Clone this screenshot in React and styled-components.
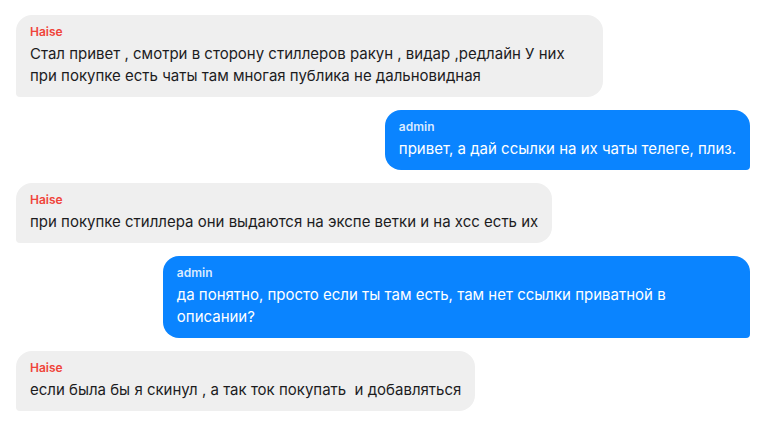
import React from "react";
import styled, { createGlobalStyle } from "styled-components";

const Global = createGlobalStyle`
  html, body { margin: 0; padding: 0; background: #ffffff; }
  body { font-family: Inter, "Noto Sans", sans-serif; }
`;

const Chat = styled.div`
  display: flex;
  flex-direction: column;
  gap: 13px;
  padding: 15px 16px;
`;

const Row = styled.div`
  display: flex;
  justify-content: ${(p) => (p.$mine ? "flex-end" : "flex-start")};
`;

const Bubble = styled.div`
  max-width: 80%;
  box-sizing: border-box;
  padding: 8px 14px 10px;
  background: ${(p) => (p.$mine ? "#0a84ff" : "#efefef")};
  color: ${(p) => (p.$mine ? "#ffffff" : "#1c1c1e")};
  border-radius: ${(p) => (p.$mine ? "16px 16px 4px 16px" : "16px 16px 16px 4px")};
`;

const Name = styled.div`
  font-size: 12px;
  font-weight: 600;
  line-height: 18px;
  margin-bottom: 2px;
  color: ${(p) => (p.$mine ? "rgba(255,255,255,0.85)" : "#f0443a")};
`;

const Text = styled.div`
  font-size: 15px;
  line-height: 22px;
  white-space: pre-wrap;
`;

const messages = [
  { name: "Haise", text: "Стал привет , смотри в сторону стиллеров ракун , видар ,редлайн У них при покупке есть чаты там многая публика не дальновидная" },
  { name: "admin", mine: true, text: "привет, а дай ссылки на их чаты телеге, плиз." },
  { name: "Haise", text: "при покупке стиллера они выдаются на экспе ветки и на хсс есть их" },
  { name: "admin", mine: true, text: "да понятно, просто если ты там есть, там нет ссылки приватной в описании?" },
  { name: "Haise", text: "если была бы я скинул , а так ток покупать  и добавляться" },
];

export default function App() {
  return (
    <>
      <Global />
      <Chat>
        {messages.map((m, i) => (
          <Row key={i} $mine={m.mine}>
            <Bubble $mine={m.mine}>
              <Name $mine={m.mine}>{m.name}</Name>
              <Text>{m.text}</Text>
            </Bubble>
          </Row>
        ))}
      </Chat>
    </>
  );
}
